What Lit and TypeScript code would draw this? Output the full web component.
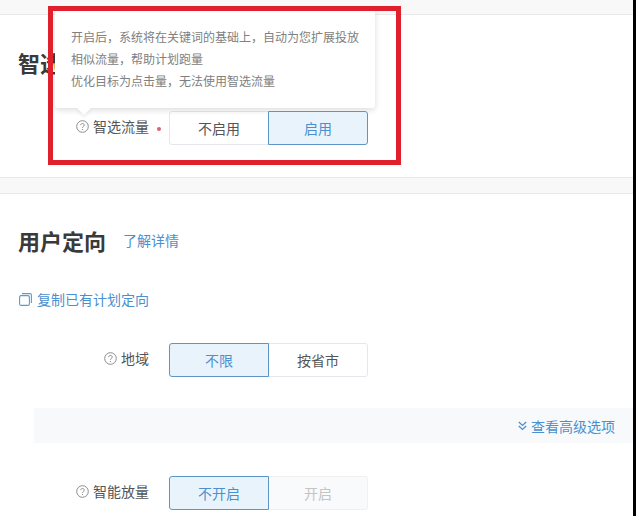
import { LitElement, css, html } from "lit";
import { customElement } from "lit/decorators.js";

const helpIcon = html`<svg class="help" width="13" height="13" viewBox="0 0 13 13" fill="none" stroke="#8c8c8c" stroke-width="1">
  <circle cx="6.5" cy="6.5" r="5.8"></circle>
  <path d="M4.7 5.1c0-1 .8-1.6 1.8-1.6s1.8.6 1.8 1.5c0 1.3-1.8 1.4-1.8 2.8"></path>
  <path d="M6.5 9v1"></path>
</svg>`;

@customElement("app-root")
export class AppRoot extends LitElement {
  static styles = css`
    :host {
      display: block;
      position: relative;
      width: 636px;
      height: 516px;
      box-sizing: border-box;
      border-right: 3px solid #000;
      overflow: hidden;
      background: #fff;
      font-family: "Liberation Sans", "Noto Sans CJK SC", sans-serif;
      font-size: 14px;
      color: #555;
    }

    .band {
      background: #f8f8f8;
      border-bottom: 1px solid #e8e8e8;
    }
    .band.top {
      height: 14px;
    }
    .band.mid {
      height: 15px;
      border-top: 1px solid #e8e8e8;
    }

    .section {
      padding-left: 19px;
    }
    .section.first {
      height: 162px;
      padding-top: 32px;
      box-sizing: border-box;
    }
    .section.first .row {
      margin-top: 34px;
    }

    .heading {
      display: flex;
      align-items: center;
      height: 30px;
      gap: 17px;
    }
    .heading h2 {
      margin: 0 0 0 -1px;
      font-size: 22px;
      font-weight: 700;
      color: #3a3a3a;
    }
    .second {
      padding-top: 31px;
    }

    a {
      color: #4a90cf;
      text-decoration: none;
    }

    .copy {
      display: flex;
      align-items: center;
      gap: 5px;
      margin-top: 34px;
      height: 20px;
    }

    .row {
      display: grid;
      grid-template-columns: 130px 20px auto;
      justify-content: start;
      align-items: center;
      height: 34px;
    }
    .second .row {
      margin-top: 34px;
    }
    .second .row.last {
      margin-top: 33px;
    }

    .label {
      display: flex;
      align-items: center;
      justify-content: flex-end;
      gap: 4px;
      padding-bottom: 4px;
    }
    .mark {
      text-align: center;
    }
    .mark i {
      display: inline-block;
      width: 4px;
      height: 4px;
      border-radius: 50%;
      background: #d9656f;
      vertical-align: middle;
      margin-left: -1px;
    }

    .seg {
      display: flex;
      width: 199px;
      height: 34px;
      box-sizing: border-box;
    }
    .seg span {
      flex: 0 0 100px;
      display: flex;
      align-items: center;
      justify-content: center;
      box-sizing: border-box;
      padding-bottom: 1px;
      border: 1px solid #e4e7eb;
      color: #555;
      background: #fff;
    }
    .seg span:first-child {
      border-radius: 3px 0 0 3px;
    }
    .seg span:last-child {
      border-radius: 0 3px 3px 0;
      margin-left: -1px;
    }
    .seg span.on {
      position: relative;
      z-index: 1;
      background: #e9f3fc;
      border-color: #5d96c6;
      color: #4a90cf;
    }
    .seg span.off {
      background: #f9fafb;
      border-color: #eef0f2;
      color: #c4c4c4;
    }

    .more {
      display: flex;
      align-items: center;
      justify-content: flex-end;
      gap: 4px;
      height: 35px;
      margin: 31px 0 0 15px;
      padding-right: 18px;
      background: #f8f9fa;
    }

    .tip {
      position: absolute;
      left: 55px;
      top: 10px;
      width: 320px;
      height: 98px;
      box-sizing: border-box;
      padding: 17px 0 0 16px;
      background: #fff;
      box-shadow: 0 2px 6px rgba(0, 0, 0, 0.14);
      border-radius: 3px;
      font-size: 12px;
      line-height: 22px;
      color: #808080;
    }
    .tip::after {
      content: "";
      position: absolute;
      left: 24px;
      bottom: -5px;
      width: 10px;
      height: 10px;
      background: #fff;
      transform: rotate(45deg);
      box-shadow: 2px 2px 3px rgba(0, 0, 0, 0.06);
    }

    .frame {
      position: absolute;
      left: 48px;
      top: 6px;
      width: 353px;
      height: 159px;
      box-sizing: border-box;
      border: 5px solid #e0202c;
    }
  `;

  render() {
    return html`
      <div class="band top"></div>
      <section class="section first">
        <div class="heading"><h2>智选流量</h2></div>
        <div class="row">
          <div class="label">${helpIcon}<span>智选流量</span></div>
          <div class="mark"><i></i></div>
          <div class="seg"><span>不启用</span><span class="on">启用</span></div>
        </div>
      </section>
      <div class="band mid"></div>
      <section class="section second">
        <div class="heading"><h2>用户定向</h2><a href="#">了解详情</a></div>
        <a class="copy" href="#">
          <svg width="13" height="13" viewBox="0 0 13 13" fill="none" stroke="#5b9bd0" stroke-width="1.1">
            <rect x="0.6" y="2.6" width="9.8" height="9.8" rx="1.5"></rect>
            <path d="M3 .6h8a1.4 1.4 0 0 1 1.4 1.4v8"></path>
          </svg>
          <span>复制已有计划定向</span>
        </a>
        <div class="row">
          <div class="label">${helpIcon}<span>地域</span></div>
          <div class="mark"></div>
          <div class="seg"><span class="on">不限</span><span>按省市</span></div>
        </div>
        <a class="more" href="#">
          <svg width="9" height="10" viewBox="0 0 9 10" fill="none" stroke="#4a90cf" stroke-width="1.3">
            <path d="M.8 1l3.7 3.4L8.2 1"></path>
            <path d="M.8 5l3.7 3.4L8.2 5"></path>
          </svg>
          <span>查看高级选项</span>
        </a>
        <div class="row last">
          <div class="label">${helpIcon}<span>智能放量</span></div>
          <div class="mark"></div>
          <div class="seg"><span class="on">不开启</span><span class="off">开启</span></div>
        </div>
      </section>
      <div class="tip">
        开启后，系统将在关键词的基础上，自动为您扩展投放<br />
        相似流量，帮助计划跑量<br />
        优化目标为点击量，无法使用智选流量
      </div>
      <div class="frame"></div>
    `;
  }
}
